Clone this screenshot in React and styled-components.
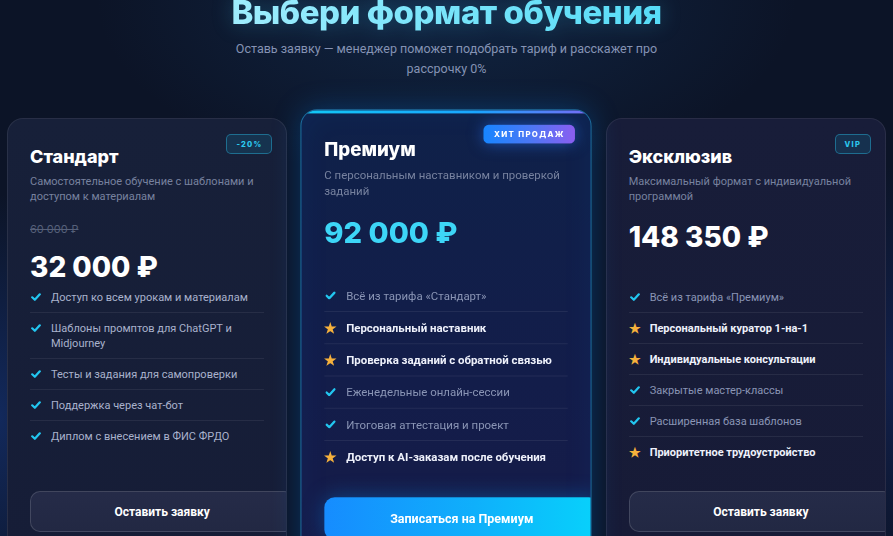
import React from 'react';
import styled, { createGlobalStyle, css } from 'styled-components';

const GlobalStyle = createGlobalStyle`
  html, body {
    margin: 0;
    padding: 0;
    height: 100%;
    overflow: hidden;
  }
  body {
    font-family: Roboto, "Noto Sans", "Liberation Sans", sans-serif;
    background:
      radial-gradient(ellipse 120px 320px at 0% 78%, rgba(30, 80, 190, 0.35), transparent 70%),
      radial-gradient(ellipse 500px 260px at 50% 0%, rgba(25, 70, 120, 0.35), transparent 70%),
      radial-gradient(ellipse 220px 300px at 100% 70%, rgba(30, 60, 160, 0.3), transparent 70%),
      #0c1427;
    color: #fff;
  }
`;

const heading = css`
  font-family: Inter, "Noto Sans", "Liberation Sans", sans-serif;
`;

const Section = styled.section`
  padding: 0 7px;
  margin-top: -7px;
`;

const Title = styled.h2`
  ${heading};
  margin: 0;
  text-align: center;
  font-size: 33px;
  line-height: 38px;
  font-weight: 800;
  letter-spacing: -0.5px;
  background: linear-gradient(90deg, #c9f5ff 0%, #7fe6fb 45%, #34d3f3 100%);
  -webkit-background-clip: text;
  background-clip: text;
  color: transparent;
  filter: drop-shadow(0 0 10px rgba(60, 210, 250, 0.25));
`;

const Subtitle = styled.p`
  margin: 8px auto 0;
  max-width: 440px;
  text-align: center;
  font-size: 12.5px;
  line-height: 20px;
  color: #8593b4;
`;

const Grid = styled.div`
  margin-top: 39px;
  display: grid;
  grid-template-columns: repeat(3, 1fr);
  gap: 19px;
  align-items: start;
`;

const Card = styled.div`
  position: relative;
  overflow: hidden;
  box-sizing: border-box;
  height: 437px;
  padding: 27px 22px 22px;
  border-radius: 16px;
  display: flex;
  flex-direction: column;
  border: 1px solid rgba(255, 255, 255, 0.08);
  background: ${p =>
    p.$tone === 'violet'
      ? 'linear-gradient(180deg, #181d39 0%, #171b37 100%)'
      : 'linear-gradient(180deg, #172039 0%, #161d37 100%)'};

  & > * {
    flex-shrink: 0;
  }

  ${p =>
    p.$featured &&
    css`
      transform: scale(1.04);
      z-index: 1;
      border: 1px solid rgba(40, 180, 240, 0.55);
      background: linear-gradient(180deg, #0f2149 0%, #131d4a 60%, #161b48 100%);
      box-shadow: 0 0 28px rgba(0, 140, 255, 0.28), inset 0 0 30px rgba(0, 120, 255, 0.08);

      &::before {
        content: '';
        position: absolute;
        left: 0;
        right: 0;
        top: 0;
        height: 3px;
        background: linear-gradient(90deg, #12c8f5 0%, #1aa6ff 60%, #7a6cf5 100%);
      }
    `}
`;

const Badge = styled.span`
  ${heading};
  position: absolute;
  top: 15px;
  right: 14px;
  height: 18px;
  padding: 0 9px;
  display: flex;
  align-items: center;
  border-radius: 5px;
  font-size: 7.5px;
  font-weight: 800;
  letter-spacing: 1.2px;
  ${p =>
    p.$hot
      ? css`
          right: 15px;
          top: 14px;
          padding: 0 10px;
          color: #fff;
          letter-spacing: 1.3px;
          background: linear-gradient(90deg, #1785ff 0%, #4a78f5 50%, #8a5ef0 100%);
          box-shadow: 0 0 14px rgba(40, 120, 255, 0.55);
        `
      : css`
          color: #2cc8ee;
          background: rgba(20, 90, 120, 0.35);
          border: 1px solid rgba(40, 170, 210, 0.5);
        `}
`;

const PlanName = styled.h3`
  ${heading};
  margin: 0;
  font-size: 18px;
  line-height: 22px;
  font-weight: 800;
  color: #fff;
`;

const Description = styled.p`
  margin: 6px 0 0;
  font-size: 11px;
  line-height: 15px;
  color: #77829f;
`;

const PriceBlock = styled.div`
  margin-top: 18px;
  height: 58px;
`;

const OldPrice = styled.div`
  ${heading};
  font-size: 11px;
  line-height: 14px;
  color: #566079;
  text-decoration: line-through;
`;

const Price = styled.div`
  ${heading};
  margin-top: ${p => (p.$afterOld ? '16px' : '0')};
  font-size: 28px;
  line-height: 31px;
  font-weight: 800;
  color: ${p => (p.$accent ? '#3dd6f7' : '#fff')};
`;

const Features = styled.ul`
  list-style: none;
  margin: 2px 0 0;
  padding: 0;
  flex: 1 1 auto;
`;

const Feature = styled.li`
  display: flex;
  align-items: flex-start;
  gap: 9px;
  padding: 7.5px 0;
  font-size: 11px;
  line-height: 15px;
  border-bottom: 1px solid rgba(255, 255, 255, 0.07);
  color: ${p => (p.$star ? '#eef1fb' : p.$dim ? '#8a95b5' : '#a9b2cc')};
  font-weight: ${p => (p.$star ? 700 : 400)};

  &:last-child {
    border-bottom: none;
  }
`;

const Mark = styled.span`
  flex: 0 0 12px;
  width: 12px;
  height: 15px;
  display: flex;
  align-items: center;
  justify-content: center;
  color: ${p => (p.$star ? '#f6b13c' : '#22c6f0')};
  font-size: 13px;
`;

const Button = styled.button`
  flex: 0 0 auto;
  box-sizing: border-box;
  width: calc(100% + 30px);
  height: 41px;
  border-radius: 10px;
  font-family: inherit;
  font-size: 12px;
  font-weight: 700;
  color: #fff;
  cursor: pointer;
  ${p =>
    p.$primary
      ? css`
          border: none;
          background: linear-gradient(90deg, #168cff 0%, #0fb0fb 55%, #07d2fb 100%);
          box-shadow: 0 0 20px rgba(0, 150, 255, 0.35);
        `
      : css`
          border: 1px solid rgba(255, 255, 255, 0.14);
          background: linear-gradient(180deg, #252b48 0%, #222843 100%);
        `}
`;

const Check = () => (
  <svg width="10" height="8" viewBox="0 0 10 8" fill="none">
    <path d="M1.2 4.3 L3.8 6.8 L8.8 1.3" stroke="currentColor" strokeWidth="2.2" strokeLinecap="round" strokeLinejoin="round" />
  </svg>
);

const plans = [
  {
    name: 'Стандарт',
    desc: 'Самостоятельное обучение с шаблонами и доступом к материалам',
    old: '60 000 ₽',
    price: '32 000 ₽',
    badge: '-20%',
    button: 'Оставить заявку',
    features: [
      ['Доступ ко всем урокам и материалам'],
      ['Шаблоны промптов для ChatGPT и Midjourney'],
      ['Тесты и задания для самопроверки'],
      ['Поддержка через чат-бот'],
      ['Диплом с внесением в ФИС ФРДО'],
    ],
  },
  {
    name: 'Премиум',
    desc: 'С персональным наставником и проверкой заданий',
    price: '92 000 ₽',
    badge: 'ХИТ ПРОДАЖ',
    hot: true,
    featured: true,
    button: 'Записаться на Премиум',
    features: [
      ['Всё из тарифа «Стандарт»'],
      ['Персональный наставник', true],
      ['Проверка заданий с обратной связью', true],
      ['Еженедельные онлайн-сессии'],
      ['Итоговая аттестация и проект'],
      ['Доступ к AI-заказам после обучения', true],
    ],
  },
  {
    name: 'Эксклюзив',
    desc: 'Максимальный формат с индивидуальной программой',
    price: '148 350 ₽',
    badge: 'VIP',
    tone: 'violet',
    button: 'Оставить заявку',
    features: [
      ['Всё из тарифа «Премиум»'],
      ['Персональный куратор 1-на-1', true],
      ['Индивидуальные консультации', true],
      ['Закрытые мастер-классы'],
      ['Расширенная база шаблонов'],
      ['Приоритетное трудоустройство', true],
    ],
  },
];

export default function App() {
  return (
    <>
      <GlobalStyle />
      <Section>
        <Title>Выбери формат обучения</Title>
        <Subtitle>
          Оставь заявку — менеджер поможет подобрать тариф и расскажет про рассрочку 0%
        </Subtitle>
        <Grid>
          {plans.map(plan => (
            <Card key={plan.name} $featured={plan.featured} $tone={plan.tone}>
              <Badge $hot={plan.hot}>{plan.badge}</Badge>
              <PlanName>{plan.name}</PlanName>
              <Description>{plan.desc}</Description>
              <PriceBlock>
                {plan.old && <OldPrice>{plan.old}</OldPrice>}
                <Price $afterOld={!!plan.old} $accent={plan.featured}>
                  {plan.price}
                </Price>
              </PriceBlock>
              <Features>
                {plan.features.map(([text, star]) => (
                  <Feature key={text} $star={star} $dim={!plan.old}>
                    <Mark $star={star}>{star ? '★' : <Check />}</Mark>
                    <span>{text}</span>
                  </Feature>
                ))}
              </Features>
              <Button $primary={plan.featured}>{plan.button}</Button>
            </Card>
          ))}
        </Grid>
      </Section>
    </>
  );
}
